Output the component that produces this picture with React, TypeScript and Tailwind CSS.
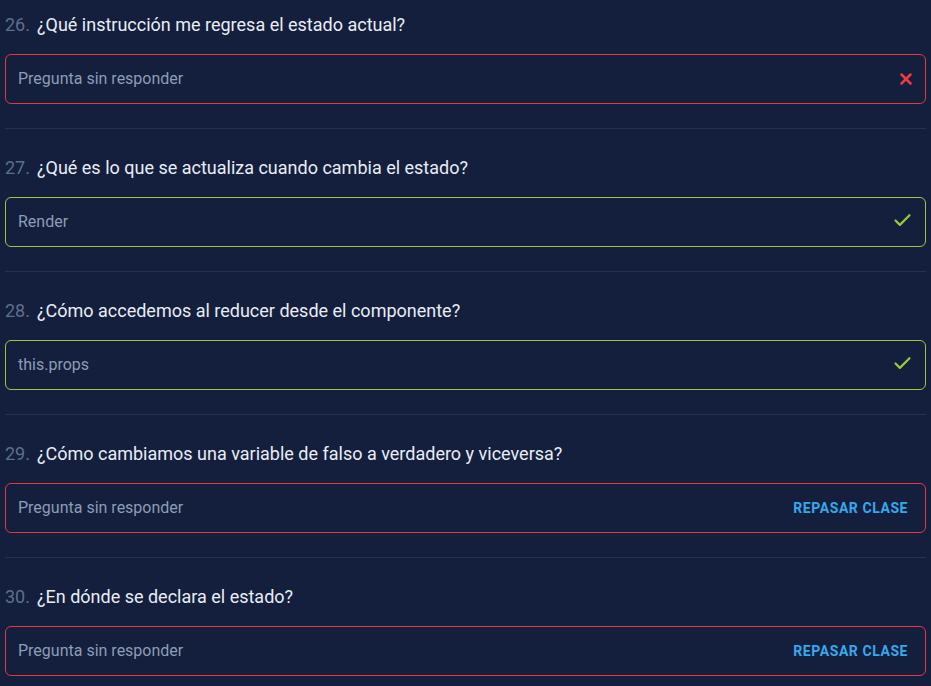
import { X, Check } from 'lucide-react';

type Status = 'wrong' | 'right' | 'empty';

const questions: { n: number; q: string; answer: string | null; status: Status }[] = [
  { n: 26, q: '¿Qué instrucción me regresa el estado actual?', answer: null, status: 'wrong' },
  { n: 27, q: '¿Qué es lo que se actualiza cuando cambia el estado?', answer: 'Render', status: 'right' },
  { n: 28, q: '¿Cómo accedemos al reducer desde el componente?', answer: 'this.props', status: 'right' },
  { n: 29, q: '¿Cómo cambiamos una variable de falso a verdadero y viceversa?', answer: null, status: 'empty' },
  { n: 30, q: '¿En dónde se declara el estado?', answer: null, status: 'empty' },
];

export default function App() {
  return (
    <div className="min-h-screen bg-[#131f3c] px-[5px] pt-3 font-['Roboto',sans-serif]">
      {questions.map((item, i) => (
        <div
          key={item.n}
          className={
            i === questions.length - 1
              ? 'pt-0'
              : 'border-b border-[#24324f] pb-6 mb-[26px]'
          }
        >
          {/* Question */}
          <div className="flex items-center gap-[7px] h-6 text-[18px]">
            <span className="text-[#5d6f8d]">{item.n}.</span>
            <span className="text-[#e9edf4]">{item.q}</span>
          </div>

          {/* Answer box */}
          <div
            className={
              'mt-[18px] h-[50px] rounded-md border flex items-center justify-between pl-3 pr-3 ' +
              (item.status === 'right' ? 'border-[#9bc93e]' : 'border-[#e0393e]')
            }
          >
            <span className="text-[16px] text-[#8e9cb6]">
              {item.answer ?? 'Pregunta sin responder'}
            </span>
            {item.status === 'wrong' && (
              <X size={18} strokeWidth={3.3} className="text-[#f03a3f] -mr-[1.5px]" />
            )}
            {item.status === 'right' && (
              <Check size={21} strokeWidth={2.5} className="text-[#9bc93e] mb-[3px]" />
            )}
            {item.status === 'empty' && (
              <button className="pl-1.5 pr-[5px] text-[14px] font-bold tracking-[0.04em] text-[#35a9ee]">
                REPASAR CLASE
              </button>
            )}
          </div>
        </div>
      ))}
    </div>
  );
}
